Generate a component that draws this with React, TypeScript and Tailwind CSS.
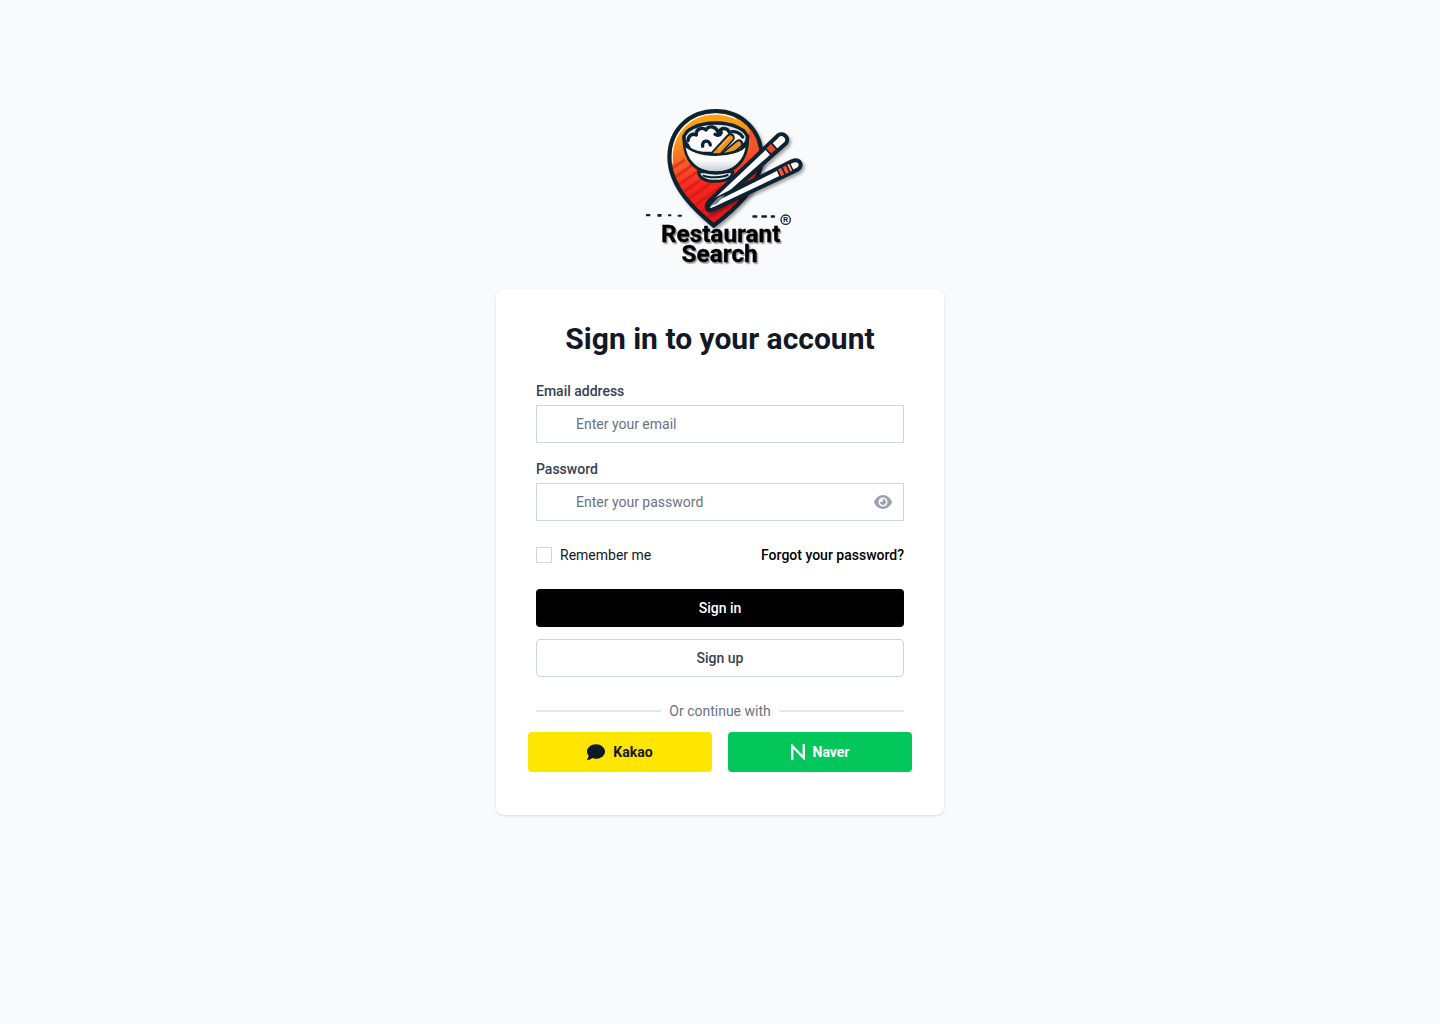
import { useState } from "react";
import { FaComment, FaEye } from "react-icons/fa6";

const INK = "#0b2430";

function Logo() {
  return (
    <svg
      viewBox="0 0 540 555"
      role="img"
      aria-label="Restaurant Search"
      className="h-[185px] w-[180px]"
    >
      <defs>
        <linearGradient id="pin" x1="0.3" y1="0" x2="0.5" y2="1">
          <stop offset="0" stopColor="#fba60f" />
          <stop offset="0.2" stopColor="#fb9a1c" />
          <stop offset="0.45" stopColor="#f9532a" />
          <stop offset="0.62" stopColor="#f8281f" />
          <stop offset="1" stopColor="#e3141b" />
        </linearGradient>
        <linearGradient id="bowl" x1="0" y1="0" x2="0" y2="1">
          <stop offset="0.5" stopColor="#ffffff" />
          <stop offset="1" stopColor="#c9cdd4" />
        </linearGradient>
        <clipPath id="pinClip">
          <path d="M236 392C190 354 103 280 103 186C103 105 163 48 242 48C321 48 380 107 380 186C380 280 285 354 236 392Z" />
        </clipPath>
        <filter id="shade" x="-20%" y="-20%" width="150%" height="150%">
          <feDropShadow dx="6" dy="7" stdDeviation="5" floodColor="#000" floodOpacity="0.35" />
        </filter>
        <filter id="textShade" x="-10%" y="-20%" width="120%" height="150%">
          <feDropShadow dx="4" dy="5" stdDeviation="2" floodColor="#000" floodOpacity="0.4" />
        </filter>
      </defs>

      <g filter="url(#shade)">
        <path
          d="M236 392C190 354 103 280 103 186C103 105 163 48 242 48C321 48 380 107 380 186C380 280 285 354 236 392Z"
          fill="url(#pin)"
          stroke={INK}
          strokeWidth="12"
        />
      </g>
      <g clipPath="url(#pinClip)">
        <g stroke="#b91414" strokeOpacity="0.45" strokeWidth="9" fill="none">
          <path d="M108 222L150 194" />
          <path d="M112 252L178 206" />
          <path d="M122 276L190 228" />
          <path d="M136 298L208 247" />
          <path d="M152 318L238 256" />
          <path d="M170 338L262 272" />
          <path d="M190 356L226 330" />
          <path d="M210 374L290 318" />
        </g>
        <path d="M350 96C384 150 378 220 340 262C352 210 354 160 340 118Z" fill="#f4512a" />
        <path
          d="M112 205C105 118 163 57 240 57C266 57 288 64 304 72"
          fill="none"
          stroke="#fff3df"
          strokeWidth="4"
        />
        <path
          d="M236 392C190 354 103 280 103 186C103 105 163 48 242 48C321 48 380 107 380 186C380 280 285 354 236 392Z"
          fill="none"
          stroke={INK}
          strokeWidth="12"
        />
      </g>

      <path
        d="M190 230C194 253 216 259 242 259C268 259 291 253 294 230Z"
        fill="#e9ebef"
        stroke={INK}
        strokeWidth="9"
        strokeLinejoin="round"
      />
      <path d="M203 241C220 249 262 249 280 239" fill="none" stroke={INK} strokeWidth="6" />
      <path
        d="M147 126C147 199 184 234 242 234C299 234 338 199 338 126Z"
        fill="url(#bowl)"
        stroke={INK}
        strokeWidth="10"
      />
      <ellipse cx="242" cy="129" rx="95" ry="45" fill="#dbe2e6" stroke={INK} strokeWidth="10" />
      <path
        d="M158 138C158 120 172 115 183 120C181 102 201 94 213 104C222 90 242 92 249 108C260 94 277 98 282 110C299 104 318 114 326 132L312 170H172Z"
        fill="#ffffff"
      />
      <path
        d="M159 137C160 120 174 114 184 120C182 101 202 95 213 105C221 91 243 92 250 114C259 95 278 98 283 112C298 106 315 113 323 126M240 118C247 124 256 121 259 113M203 154C200 134 224 134 226 150"
        fill="none"
        stroke={INK}
        strokeWidth="10"
        strokeLinecap="round"
        strokeLinejoin="round"
      />
      <g strokeLinecap="round" fill="none">
        <path d="M242 176L286 128" stroke={INK} strokeWidth="27" />
        <path d="M278 174L312 145" stroke={INK} strokeWidth="25" />
        <path d="M240 179L286 129" stroke="#ef8f17" strokeWidth="16" />
        <path d="M275 176L311 147" stroke="#ee9522" strokeWidth="15" />
        <path d="M252 159L282 128" stroke="#ffb545" strokeWidth="4" />
      </g>
      <path
        d="M152 157C180 185 299 190 332 156C325 198 293 228 242 228C192 228 160 202 152 157Z"
        fill="url(#bowl)"
      />
      <path d="M148 146C174 189 306 191 336 146" fill="none" stroke={INK} strokeWidth="8" />

      <g filter="url(#shade)" strokeLinejoin="round">
        <path
          d="M218 341C213 335 216 325 224 316L424 126C440 106 466 126 453 145L238 335C230 342 222 345 218 341Z"
          fill="#ffffff"
          stroke={INK}
          strokeWidth="12"
        />
        <path
          d="M218 342C218 332 232 318 246 311L470 199C493 188 507 211 488 224L240 341C229 346 220 346 218 342Z"
          fill="#ffffff"
          stroke={INK}
          strokeWidth="12"
        />
      </g>
      <path d="M225 334L250 307L270 300L246 326Z" fill="#7e8790" />
      <path
        d="M408 143L426 163L408 179L391 160Z"
        fill="#ef4630"
        stroke={INK}
        strokeWidth="5"
        strokeLinejoin="round"
      />
      <path d="M426 222L437 247L475 229L463 204Z" fill="#f1543a" stroke={INK} strokeWidth="5" />
      <path d="M440 215L451 240M454 208L465 234" stroke={INK} strokeWidth="5" />
      <path d="M457 209L462 207L471 226L467 228Z" fill="#f7b178" />

      <g fill={INK}>
        <rect x="33" y="357" width="13" height="7" rx="2" />
        <rect x="67" y="357" width="13" height="8" rx="2" />
        <rect x="99" y="358" width="10" height="6" rx="2" />
        <rect x="128" y="359" width="13" height="6" rx="2" />
        <rect x="352" y="361" width="15" height="7" rx="2" />
        <rect x="379" y="361" width="17" height="7" rx="2" />
        <rect x="407" y="361" width="13" height="7" rx="2" />
      </g>

      <circle cx="452" cy="374" r="14" fill="none" stroke={INK} strokeWidth="4" />
      <text
        x="452"
        y="382"
        textAnchor="middle"
        fill={INK}
        className="font-['Roboto',sans-serif] text-[24px] font-bold"
      >
        R
      </text>

      <g
        filter="url(#textShade)"
        fill="#000"
        stroke="#000"
        strokeWidth="1"
        strokeLinejoin="round"
        textAnchor="middle"
        className="font-['Roboto',sans-serif] text-[73px] font-bold"
      >
        <text x="257" y="441">Restaurant</text>
        <text x="254" y="502">Search</text>
      </g>
    </svg>
  );
}

function NaverMark() {
  return (
    <svg viewBox="0 0 14 16" aria-hidden="true" className="h-4 w-3.5" fill="none">
      <path d="M1.2 16V2L12.8 14V0" stroke="currentColor" strokeWidth="2.4" />
    </svg>
  );
}

const inputClass =
  "block h-[38px] w-full border border-gray-300 bg-white pl-[39px] pr-10 text-sm text-gray-900 placeholder:text-gray-500";

export default function App() {
  const [visible, setVisible] = useState(false);

  return (
    <main className="flex min-h-screen flex-col items-center bg-[#f9fafc] pt-[95px] pb-12 font-['Roboto',sans-serif] text-sm text-[#111827]">
      <div className="ml-[10px]">
        <Logo />
      </div>
      <section className="mt-[9px] w-full max-w-md rounded-lg bg-white px-10 pt-8 pb-[43px] shadow-sm">
        <h1 className="text-center text-3xl font-bold">Sign in to your account</h1>

        <form className="mt-6" onSubmit={(e) => e.preventDefault()}>
          <label htmlFor="email" className="block font-medium text-[#374151]">
            Email address
          </label>
          <div className="mt-1">
            <input id="email" type="email" placeholder="Enter your email" className={inputClass} />
          </div>

          <label htmlFor="password" className="mt-4 block font-medium text-[#374151]">
            Password
          </label>
          <div className="relative mt-1">
            <input
              id="password"
              type={visible ? "text" : "password"}
              placeholder="Enter your password"
              className={inputClass}
            />
            <button
              type="button"
              aria-label="Show password"
              onClick={() => setVisible(!visible)}
              className="absolute inset-y-0 right-3 flex items-center text-[#9ca3af]"
            >
              <FaEye className="h-4 w-[18px]" />
            </button>
          </div>

          <div className="mt-6 flex items-center justify-between">
            <div className="flex items-center gap-2">
              <input
                id="remember"
                type="checkbox"
                className="size-4 appearance-none border border-gray-300 bg-white checked:bg-black"
              />
              <label htmlFor="remember">Remember me</label>
            </div>
            <a href="#forgot" className="font-medium text-black">
              Forgot your password?
            </a>
          </div>

          <button
            type="submit"
            className="mt-6 h-[38px] w-full rounded bg-black font-medium text-white"
          >
            Sign in
          </button>
          <button
            type="button"
            className="mt-3 h-[38px] w-full rounded border border-gray-300 bg-white font-medium text-[#374151]"
          >
            Sign up
          </button>
        </form>

        <div className="mt-6 flex items-center gap-2 text-[#6b7280]">
          <span className="h-0.5 flex-1 bg-gray-200" />
          <span>Or continue with</span>
          <span className="h-0.5 flex-1 bg-gray-200" />
        </div>

        <div className="-mx-2 mt-[11px] grid grid-cols-2 gap-4">
          <button
            type="button"
            className="flex h-10 items-center justify-center gap-2 rounded bg-[#ffe600] font-bold"
          >
            <FaComment className="size-[18px]" />
            Kakao
          </button>
          <button
            type="button"
            className="flex h-10 items-center justify-center gap-2 rounded bg-[#03c75a] font-bold text-white"
          >
            <NaverMark />
            Naver
          </button>
        </div>
      </section>
    </main>
  );
}
